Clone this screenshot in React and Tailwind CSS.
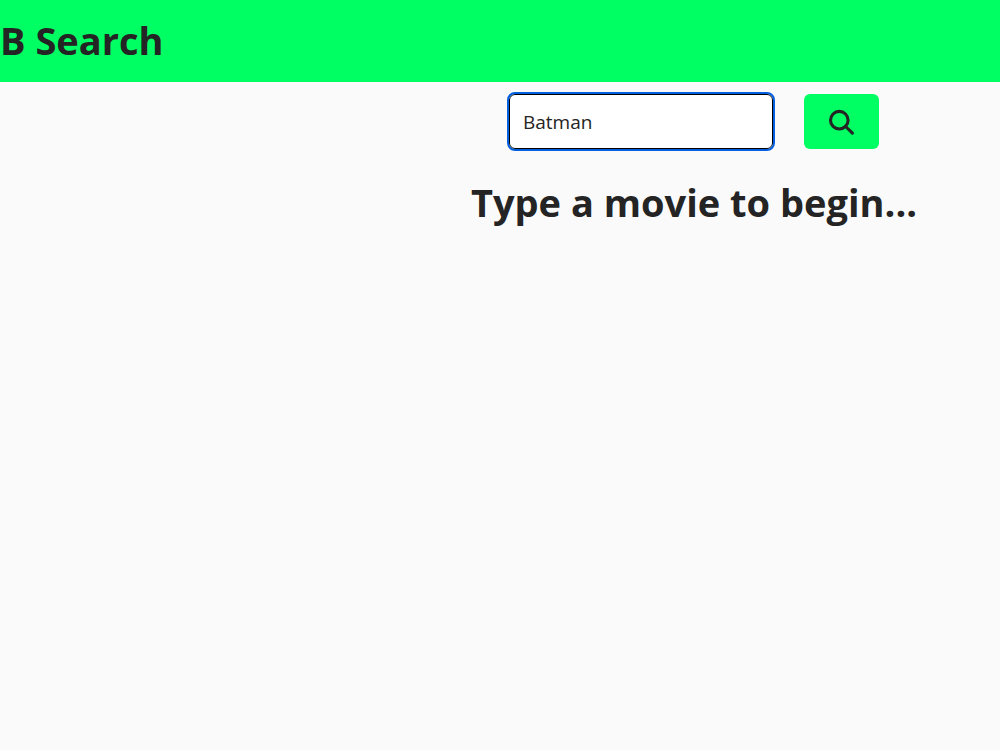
import { useState } from "react";

function SearchIcon() {
  return (
    <svg
      className="h-7 w-7"
      xmlns="http://www.w3.org/2000/svg"
      fill="none"
      viewBox="0 0 28 28"
      stroke="currentColor"
      strokeWidth="3.1"
      aria-hidden="true"
    >
      <circle cx="11.3" cy="12.2" r="8.8" />
      <path strokeLinecap="round" d="M17.6 18.5L24.4 25.2" />
    </svg>
  );
}

function App() {
  const [search, setSearch] = useState("Batman");

  return (
    <div className="min-h-screen bg-[#fafafa] font-['Segoe_UI','Open_Sans',sans-serif] text-[#242424]">
      <header className="bg-[#00ff62] pt-4 pb-[18px]">
        <h1 className="text-[38px] leading-[48px] font-bold">B Search</h1>
      </header>
      <main className="flex flex-col items-center pt-3 pl-[38.8%]">
        <form
          className="flex items-center gap-[31px]"
          onSubmit={(e) => e.preventDefault()}
        >
          <input
            type="text"
            aria-label="Movie title"
            value={search}
            onChange={(e) => setSearch(e.target.value)}
            className="h-[55px] w-[264px] rounded-md border border-black bg-white px-[13px] text-[19px] outline-2 outline-[#0560e0]"
          />
          <button
            type="submit"
            aria-label="Search"
            className="flex h-[55px] w-[75px] items-center justify-center rounded-md bg-[#00ff62]"
          >
            <SearchIcon />
          </button>
        </form>
        <h2 className="mt-[29px] text-[38px] leading-[48px] font-bold whitespace-nowrap">
          Type a movie to begin...
        </h2>
      </main>
    </div>
  );
}

export default App;
